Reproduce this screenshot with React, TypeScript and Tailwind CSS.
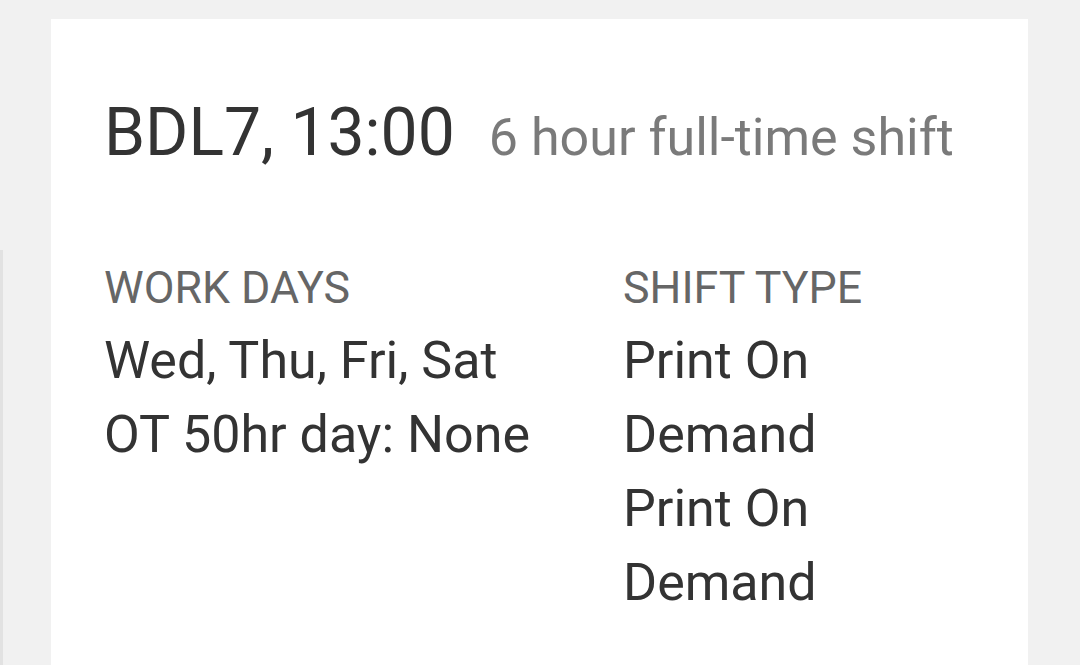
import React from 'react';

// One column of the shift details: label above, values below
const Field: React.FC<{ label: string; values: string[]; className?: string }> = ({
    label,
    values,
    className = ''
}) => (
    <div className={className}>
        <div className="text-[44.7px] leading-[48px] text-[#666666]">{label}</div>
        <div className="mt-[12px]">
            {values.map((v, idx) => (
                <div key={idx} className="text-[52px] leading-[74px] text-[#333333]">
                    {v}
                </div>
            ))}
        </div>
    </div>
);

export default function App() {
    return (
        <div
            className="relative w-[1080px] h-[665px] overflow-hidden bg-[#f1f1f1] pt-[19px] pl-[51px]"
            style={{ fontFamily: 'Roboto, "Noto Sans", sans-serif' }}
        >
            {/* edge of the neighbouring card */}
            <div className="absolute left-0 top-[250px] w-[3px] h-[420px] bg-[#e2e2e2]" />

            {/* Shift card */}
            <div className="w-[977px] h-[700px] bg-white pl-[53px] pt-[74px]">
                <div className="flex items-baseline">
                    <span className="text-[66px] leading-[80px] text-[#333333]">BDL7, 13:00</span>
                    <span className="ml-[34px] text-[52px] leading-[60px] text-[#7a7a7a]">
                        6 hour full-time shift
                    </span>
                </div>

                <div className="flex mt-[91px]">
                    <Field
                        className="w-[519px]"
                        label="WORK DAYS"
                        values={['Wed, Thu, Fri, Sat', 'OT 50hr day: None']}
                    />
                    <Field className="w-[280px]" label="SHIFT TYPE" values={['Print On Demand', 'Print On Demand']} />
                </div>
            </div>
        </div>
    );
}
